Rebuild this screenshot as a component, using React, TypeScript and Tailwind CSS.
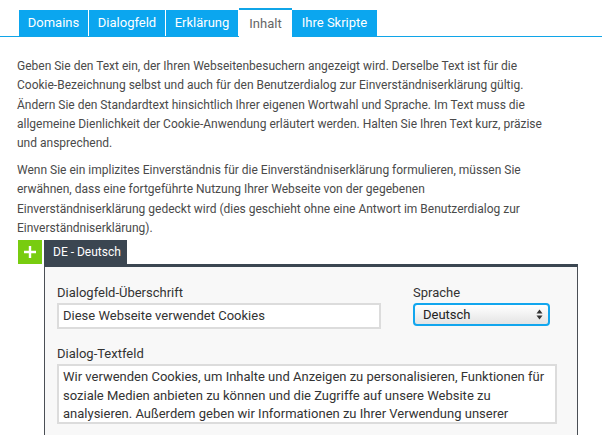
import React from "react";

const FONT = 'Roboto, "Open Sans", sans-serif';

export default function App() {
  const tabs = ["Domains", "Dialogfeld", "Erklärung", "Inhalt", "Ihre Skripte"];
  const widths = ["w-[69px]", "w-[76px]", "w-[72px]", "w-[53px]", "w-[85px]"];
  return (
    <div
      className="w-[602px] h-[435px] overflow-hidden bg-white text-[#505050]"
      style={{ fontFamily: FONT }}
    >
      <div className="flex items-end pl-[19px] pt-[7px] border-b border-[#10a5e8] h-[37px]">
        {tabs.map((t, i) =>
          t === "Inhalt" ? (
            <div
              key={t}
              className={`${widths[i]} h-[29px] mb-[-1px] bg-white border-t-2 border-[#10a5e8] text-[#666] text-[13px] flex items-center justify-center`}
            >
              {t}
            </div>
          ) : (
            <div
              key={t}
              className={`${widths[i]} h-[26px] bg-[#0ba6ef] text-white text-[13px] flex items-center justify-center ${i < 3 ? "mr-px" : ""}`}
            >
              {t}
            </div>
          )
        )}
      </div>

      <div className="pl-[17px] pr-[10px] pt-[20px] text-[12px] leading-[19.3px] text-[#4a4a4a] whitespace-nowrap">
        <p>
          Geben Sie den Text ein, der Ihren Webseitenbesuchern angezeigt wird. Derselbe Text ist für die
          <br />
          Cookie-Bezeichnung selbst und auch für den Benutzerdialog zur Einverständniserklärung gültig.
          <br />
          Ändern Sie den Standardtext hinsichtlich Ihrer eigenen Wortwahl und Sprache. Im Text muss die
          <br />
          allgemeine Dienlichkeit der Cookie-Anwendung erläutert werden. Halten Sie Ihren Text kurz, präzise
          <br />
          und ansprechend.
        </p>
        <p className="mt-[7.5px]">
          Wenn Sie ein implizites Einverständnis für die Einverständniserklärung formulieren, müssen Sie
          <br />
          erwähnen, dass eine fortgeführte Nutzung Ihrer Webseite von der gegebenen
          <br />
          Einverständniserklärung gedeckt wird (dies geschieht ohne eine Antwort im Benutzerdialog zur
          <br />
          Einverständniserklärung).
        </p>
      </div>

      <div className="flex pl-[18px] mt-[2px]">
        <div className="w-[24px] h-[24px] bg-[#78cc10] flex items-center justify-center mr-[2px]">
          <svg width="14" height="14" viewBox="0 0 14 14">
            <path d="M7 1v12M1 7h12" stroke="white" strokeWidth="2.4" />
          </svg>
        </div>
        <div className="w-[534px]">
          <div className="w-[83px] h-[24px] bg-[#3b4651] text-white text-[12px] flex items-center pl-[9px]">
            DE - Deutsch
          </div>
          <div className="border-t-[3px] border-[#3b4651] border-l border-r border-l-[#4a4f55] border-r-[#4a4f55] bg-[#f8f8f8] h-[200px] pl-[12px] pr-[20px] pt-[17px]">
            <div className="flex">
              <div className="w-[324px]">
                <div className="text-[13px] text-[#333] leading-[18px]">Dialogfeld-Überschrift</div>
                <div className="mt-[1px] h-[26px] border-2 border-[#dcdcdc] bg-white text-[13px] text-[#333] flex items-center pl-[4px]">
                  Diese Webseite verwendet Cookies
                </div>
              </div>
              <div className="ml-[32px] w-[137px]">
                <div className="text-[13px] text-[#333] leading-[18px]">Sprache</div>
                <div className="mt-[1px] h-[23px] border-2 border-[#12a6ee] rounded-[4px] bg-gradient-to-b from-white to-[#e4e4e4] text-[13px] text-[#222] flex items-center justify-between pl-[8px] pr-[5px]">
                  <span>Deutsch</span>
                  <svg width="7" height="11" viewBox="0 0 7 11">
                    <path d="M3.5 0.5L6.5 4.5H0.5Z" fill="#333" />
                    <path d="M3.5 10.5L6.5 6.5H0.5Z" fill="#333" />
                  </svg>
                </div>
              </div>
            </div>
            <div className="text-[13px] text-[#333] leading-[18px] mt-[16px]">Dialog-Textfeld</div>
            <div className="mt-[1px] w-[500px] h-[60px] border-2 border-[#dcdcdc] bg-white text-[13px] text-[#333] leading-[18.5px] pl-[4px] pt-[2px] whitespace-nowrap overflow-hidden">
              Wir verwenden Cookies, um Inhalte und Anzeigen zu personalisieren, Funktionen für
              <br />
              soziale Medien anbieten zu können und die Zugriffe auf unsere Website zu
              <br />
              analysieren. Außerdem geben wir Informationen zu Ihrer Verwendung unserer
            </div>
          </div>
        </div>
      </div>
    </div>
  );
}
